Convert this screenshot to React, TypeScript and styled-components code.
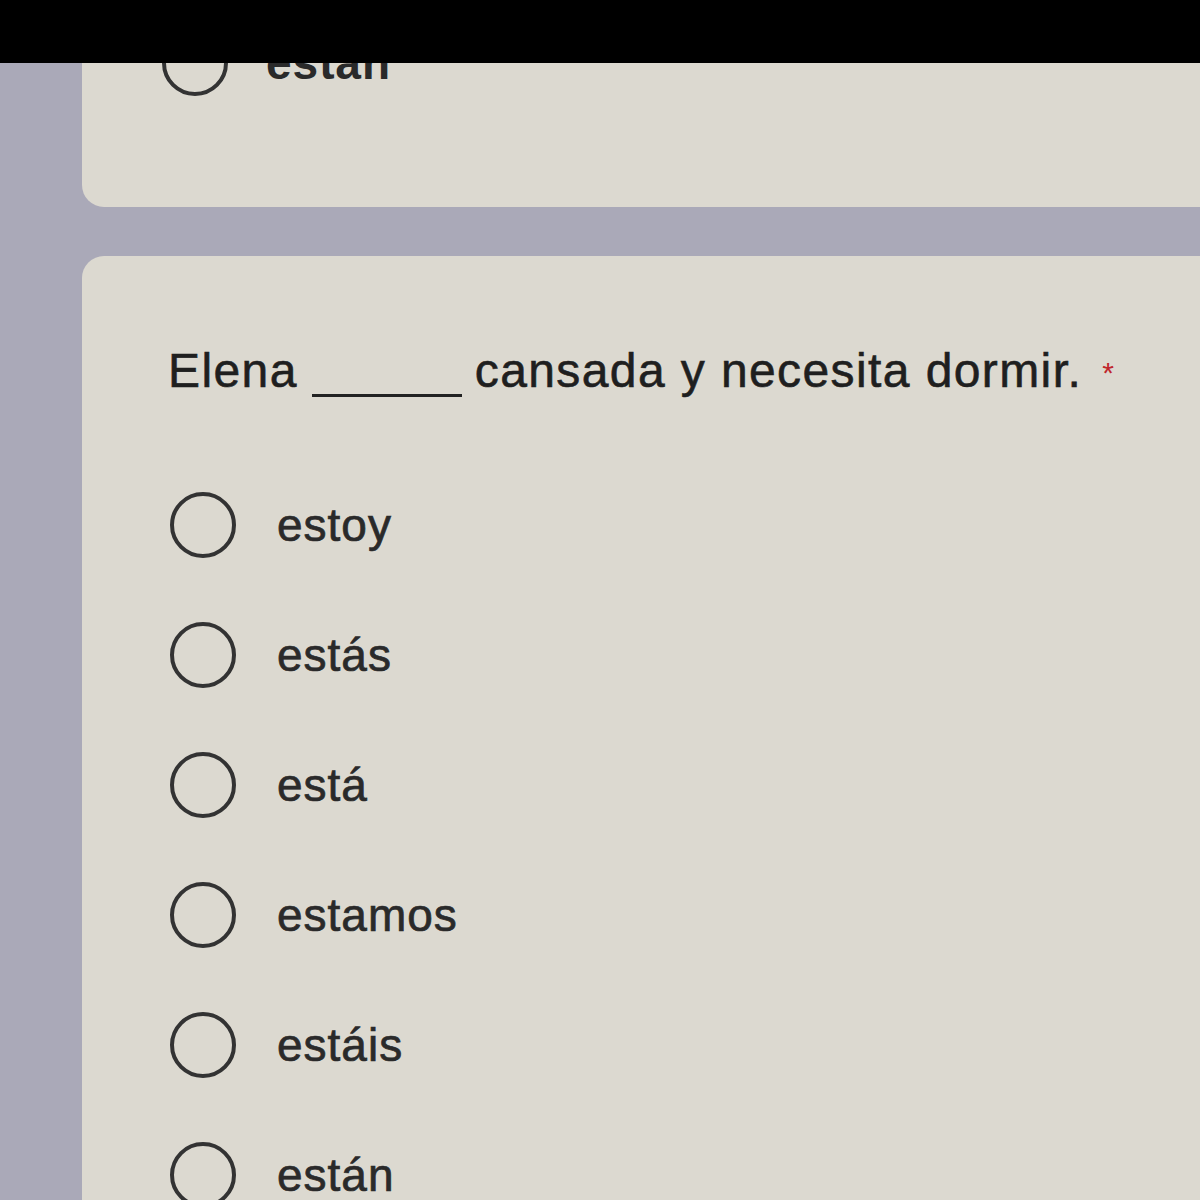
import styled, { createGlobalStyle } from "styled-components"

const GlobalStyle = createGlobalStyle`
    html, body {
        margin: 0;
        padding: 0;
        background: #aaa9b8;
        overflow: hidden;
    }
    body {
        font-family: "Liberation Sans", Arial, sans-serif;
    }
`

const Page = styled.div`
    width: 1200px;
    height: 1200px;
    display: flex;
    flex-direction: column;
    background: #aaa9b8;
`

const TopBar = styled.div`
    height: 63px;
    background: #000;
    flex-shrink: 0;
    position: relative;
    z-index: 2;
`

const Card = styled.section<{ $first?: boolean }>`
    margin-left: 82px;
    background: #dcd9d0;
    overflow: hidden;
    flex-shrink: 0;
    border-radius: ${p => p.$first ? "0 0 0 22px" : "22px 0 0 0"};
    height: ${p => p.$first ? "144px" : "950px"};
    margin-top: ${p => p.$first ? "0" : "49px"};
    padding: ${p => p.$first ? "0 0 0 80px" : "88px 0 0 86px"};
    box-sizing: border-box;
`

const Question = styled.h2`
    margin: 0;
    font-size: 48px;
    font-weight: 400;
    letter-spacing: 1.4px;
    line-height: 54px;
    color: #1f1f1f;
    white-space: nowrap;
    -webkit-text-stroke: 0.6px currentColor;
`

const Blank = styled.span`
    display: inline-block;
    width: 150px;
    height: 0;
    border-bottom: 3px solid #222;
    margin: 0 13px 0 14px;
    vertical-align: -10px;
`

const Required = styled.span`
    color: #c0262c;
    font-size: 30px;
    margin-left: 20px;
    vertical-align: 4px;
    -webkit-text-stroke: 0;
`

const Options = styled.ul<{ $first?: boolean }>`
    list-style: none;
    margin: ${p => p.$first ? "-65px 0 0" : "60px 0 0 2px"};
    padding: 0;
    display: flex;
    flex-direction: column;
`

const Option = styled.li<{ $gap?: number }>`
    display: flex;
    align-items: center;
    gap: ${p => p.$gap ?? 41}px;
    height: 130px;
`

const Radio = styled.span`
    width: 66px;
    height: 66px;
    border: 4px solid #333;
    border-radius: 50%;
    box-sizing: border-box;
    flex-shrink: 0;
`

const Label = styled.span<{ $bold?: boolean }>`
    font-size: 46px;
    letter-spacing: 1px;
    color: #2a2a2a;
    font-weight: ${p => p.$bold ? 700 : 400};
    -webkit-text-stroke: ${p => p.$bold ? "0" : "0.7px"} currentColor;
`

const choices = ["estoy", "estás", "está", "estamos", "estáis", "están"]

export default function App() {
    return (
        <Page>
            <GlobalStyle />
            <TopBar />
            <Card $first>
                <Options $first>
                    <Option $gap={38}>
                        <Radio />
                        <Label $bold>están</Label>
                    </Option>
                </Options>
            </Card>
            <Card>
                <Question>
                    Elena<Blank />cansada y necesita dormir.<Required>*</Required>
                </Question>
                <Options>
                    {choices.map(c =>
                        <Option key={c}>
                            <Radio />
                            <Label>{c}</Label>
                        </Option>
                    )}
                </Options>
            </Card>
        </Page>
    )
}
